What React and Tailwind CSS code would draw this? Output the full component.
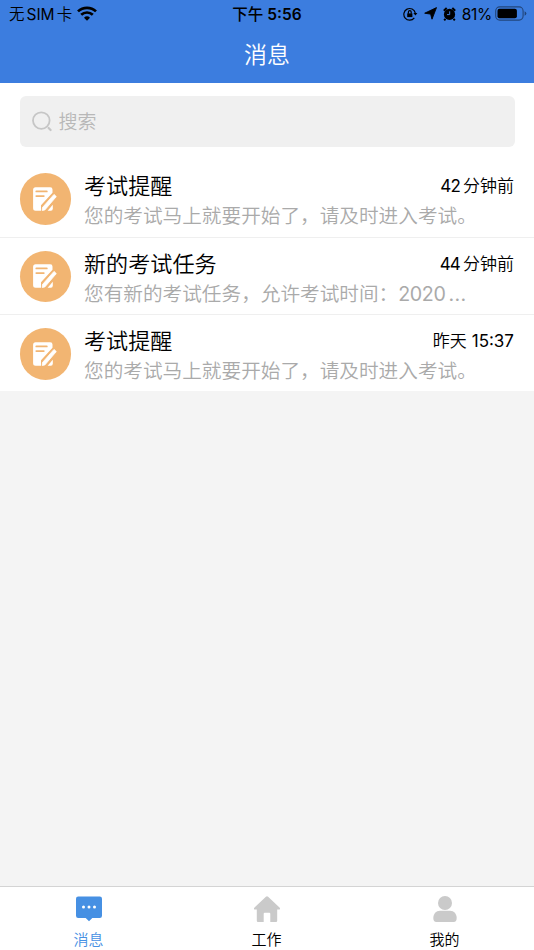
import { useState } from 'react';

const messages = [
    {
        id: 1,
        title: '考试提醒',
        content: '您的考试马上就要开始了，请及时进入考试。',
        time: <><span className="mr-[3px] font-normal tracking-[-0.8px]">42</span>分钟前</>,
    },
    {
        id: 2,
        title: '新的考试任务',
        content: <>您有新的考试任务，允许考试时间：<span className="font-normal tracking-[-0.4px]">2020</span><span className="ml-[3px] font-normal tracking-[0.4px]">...</span></>,
        time: <><span className="mr-[3px] font-normal tracking-[-0.8px]">44</span>分钟前</>,
    },
    {
        id: 3,
        title: '考试提醒',
        content: '您的考试马上就要开始了，请及时进入考试。',
        time: <>昨天<span className="ml-[5px] font-normal">15:37</span></>,
    },
];

function StatusBar() {
    return (
        <div className="flex h-[28px] items-center pl-[9px] pr-[7px] text-black">
            <div className="flex flex-1 items-center">
                <span className="pt-[1px] text-[15.5px] font-[350]">无</span>
                <span className="ml-[2px] pt-[1px] text-[15.5px]">SIM</span>
                <span className="ml-[2px] pt-[1px] text-[15.5px] font-[350]">卡</span>
                <svg className="mb-[2px] ml-[5px] h-[15px] w-[20px]" viewBox="0 0 20 15" fill="none" stroke="currentColor" strokeWidth="2.7">
                    <path d="M1 5.4a13 13 0 0 1 18 0" />
                    <path d="M4.2 8.8a8.4 8.4 0 0 1 11.6 0" />
                    <path d="M10 14.7l-3-3a4.3 4.3 0 0 1 6 0z" fill="currentColor" stroke="none" />
                </svg>
            </div>
            <div className="pr-[2px] pt-[1px] text-[15.5px] font-medium">
                下午<span className="ml-[4px] font-semibold">5:56</span>
            </div>
            <div className="flex flex-1 items-center justify-end">
                <svg className="mb-[1px] h-[14px] w-[15px]" viewBox="0 0 15 14" fill="none" stroke="currentColor" strokeWidth="1.2">
                    <path d="M11.3 10.8A5.8 5.8 0 1 1 12.3 6" />
                    <path d="M10.4 6h4l-2 2.6z" fill="currentColor" stroke="none" />
                    <path d="M4.2 6.4h5.2v3.7H4.2z" fill="currentColor" stroke="none" />
                    <path d="M5.4 6.7V5.1a1.4 1.4 0 0 1 2.8 0v1.6" />
                </svg>
                <svg className="mb-[1px] ml-[6px] h-[13px] w-[13px]" viewBox="0 0 13 13" fill="currentColor">
                    <path d="M12.5.6 8 12.2 6.6 7.1.7 6.2z" stroke="currentColor" strokeWidth=".9" strokeLinejoin="round" />
                </svg>
                <svg className="mb-[1px] ml-[6px] h-[14px] w-[13px]" viewBox="0 0 13 14">
                    <circle cx="6.5" cy="7.4" r="5.6" fill="currentColor" />
                    <path d="M.8 3.8 3.7 1.1M12.2 3.8 9.3 1.1M2.5 11.8l-1.3 1.5M10.5 11.8l1.3 1.5" stroke="currentColor" strokeWidth="2" />
                    <path d="M6.7 4.3v3.3H4" fill="none" stroke="#3c7ddf" strokeWidth="1" />
                </svg>
                <span className="ml-[6px] pt-[1px] text-[15.5px] tracking-[-0.3px]">81%</span>
                <svg className="mb-[2px] ml-[3px] h-[15px] w-[32px]" viewBox="0 0 32 15">
                    <rect x=".7" y=".9" width="27.4" height="13.2" rx="4" fill="none" stroke="#000" strokeOpacity=".45" strokeWidth="1.1" />
                    <rect x="2.5" y="2.7" width="19.4" height="9.6" rx="2" />
                    <path d="M29.6 5.2q1.8.8 1.8 2.3t-1.8 2.3z" fillOpacity=".45" />
                </svg>
            </div>
        </div>
    );
}

function ExamIcon() {
    return (
        <div className="flex size-[51.5px] shrink-0 items-center justify-center rounded-full bg-[#f2b572]">
            <svg className="size-[26px]" viewBox="0 0 26 26" fill="none">
                <path d="M3.6 1.2h14.6a2.3 2.3 0 0 1 2.3 2.3v3.3L9 19.3v5.4H3.6a2.5 2.5 0 0 1-2.500-2.500V3.700a2.500 2.500 0 0 1 2.500-2.500z" fill="#fff" />
                <path d="M4.300 5.400h10.500M4.300 10.100h7.500" stroke="#f2b572" strokeWidth="1.800" strokeLinecap="round" />
                <path d="m22 8.400 2.300 2.200-11.500 13.400-2.600.5.300-3z" fill="#fff" stroke="#fff" strokeWidth=".8" strokeLinejoin="round" />
                <path d="M20.800 18.700v4a2 2 0 0 1-2 2h-3.200z" fill="#fff" />
            </svg>
        </div>
    );
}

function MessageRow({ message }) {
    return (
        <li className="flex h-[77.5px] border-b border-[#efefef] pl-[19.5px] pr-[20px] pt-[13px] last:h-[76px] last:border-b-0">
            <ExamIcon />
            <div className="ml-[13px] min-w-0 flex-1">
                <div className="flex h-[27px] items-center justify-between">
                    <h2 className="text-[22.1px] font-[350] leading-[27px] text-black">{message.title}</h2>
                    <span className="whitespace-nowrap text-[17px] font-[350] leading-[27px] text-black">{message.time}</span>
                </div>
                <p className="mt-[2px] whitespace-nowrap text-[19.65px] font-[350] leading-[28px] text-[#aaaaaa]">{message.content}</p>
            </div>
        </li>
    );
}

function ChatIcon() {
    return (
        <svg className="h-[26px] w-[28px]" viewBox="0 0 28 26">
            <path d="M3.200.500h21.600A2.200 2.200 0 0 1 27 2.700v17a2.200 2.200 0 0 1-2.200 2.200h-7.500L14 25.300 10.700 21.900H3.200A2.200 2.200 0 0 1 1 19.700v-17A2.200 2.200 0 0 1 3.200.500z" fill="#4690e3" />
            <g fill="#fff">
                <circle cx="8.500" cy="11" r="1.500" />
                <circle cx="14" cy="11" r="1.500" />
                <circle cx="19.500" cy="11" r="1.500" />
            </g>
        </svg>
    );
}

function HomeIcon() {
    return (
        <svg className="h-[26px] w-[28px]" viewBox="0 0 28 26" fill="#cacaca">
            <path d="M12.900.8a1.600 1.600 0 0 1 2.200 0L26.500 11.600c.9.900.6 2-.5 2h-1.800v11.200q0 1.200-1.200 1.200h-5.700v-8.200q0-1-1-1h-4.600q-1 0-1 1V26H5q-1.200 0-1.200-1.200V13.600H2c-1.100 0-1.400-1.100-.5-2z" />
        </svg>
    );
}

function UserIcon() {
    return (
        <svg className="h-[26px] w-[28px]" viewBox="0 0 28 26" fill="#cacaca">
            <circle cx="14" cy="7" r="7" />
            <path d="M9 14.700h10c4 0 6.700 3.200 6.700 7.300 0 2.700-1 4-3 4H5.300c-2 0-3-1.300-3-4 0-4.100 2.700-7.300 6.700-7.300z" />
        </svg>
    );
}

const tabs = [
    { key: 'message', label: '消息', Icon: ChatIcon },
    { key: 'work', label: '工作', Icon: HomeIcon },
    { key: 'mine', label: '我的', Icon: UserIcon },
];

export default function App() {
    const [activeTab, setActiveTab] = useState('message');
    const [keyword, setKeyword] = useState('');

    return (
        <div className="flex h-[950px] w-[534px] flex-col overflow-hidden bg-[#f4f4f4] font-[Inter,'Noto_Sans_CJK_SC',sans-serif]">
            <header className="h-[83px] shrink-0 bg-[#3c7ddf]">
                <StatusBar />
                <h1 className="text-center text-[23px] font-[350] leading-[55px] text-white">消息</h1>
            </header>

            <div className="h-[77px] shrink-0 bg-white px-[19.5px] pt-[13px]">
                <label className="flex h-[51px] items-center rounded-[6px] bg-[#f0f0f0] pl-[12px]">
                    <svg className="size-[21px]" viewBox="0 0 21 21" fill="none" stroke="#c6c6c6" strokeWidth="1.8">
                        <circle cx="9.3" cy="9.6" r="8.3" />
                        <path d="m16.600 17 2 2" strokeWidth="2.200" strokeLinecap="round" />
                    </svg>
                    <input
                        type="text"
                        value={keyword}
                        onChange={(e) => setKeyword(e.target.value)}
                        placeholder="搜索"
                        className="ml-[6px] w-[400px] bg-transparent pt-[3px] text-[19px] font-[350] outline-none placeholder:text-[#b8b8b8]"
                    />
                </label>
            </div>

            <ul className="shrink-0 bg-white">
                {messages.map((message) => (
                    <MessageRow key={message.id} message={message} />
                ))}
            </ul>

            <nav className="mt-auto grid h-[64px] shrink-0 grid-cols-3 border-t border-[#d4d4d4] bg-white">
                {tabs.map(({ key, label, Icon }) => (
                    <button
                        key={key}
                        type="button"
                        onClick={() => setActiveTab(key)}
                        className="flex flex-col items-center pt-[9px]"
                    >
                        <Icon />
                        <span className={activeTab === key ? 'mt-[8px] pr-[1px] text-[15px] font-[350] leading-[20px] text-[#4690e3]' : 'mt-[8px] pr-[1px] text-[15px] font-[350] leading-[20px] text-black'}>
                            {label}
                        </span>
                    </button>
                ))}
            </nav>
        </div>
    );
}
